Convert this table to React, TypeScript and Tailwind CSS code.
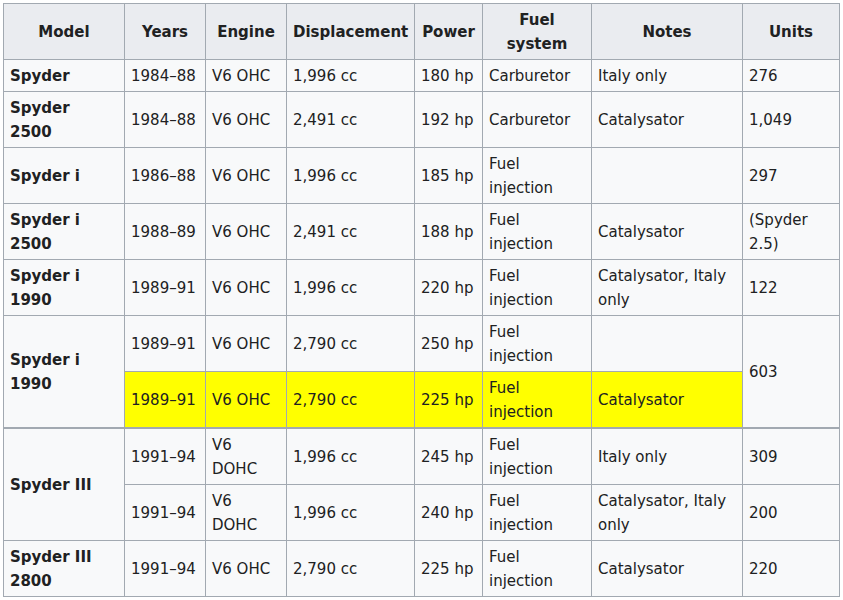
import { Fragment } from "react"

const rows: {
  model?: string
  modelSpan?: number
  years: string
  engine: string
  disp: string
  power: string
  fuel: string
  notes: string
  units?: string
  unitsSpan?: number
  highlight?: boolean
  thickTop?: boolean
}[] = [
  { model: "Spyder", years: "1984–88", engine: "V6 OHC", disp: "1,996 cc", power: "180 hp", fuel: "Carburetor", notes: "Italy only", units: "276" },
  { model: "Spyder|2500", years: "1984–88", engine: "V6 OHC", disp: "2,491 cc", power: "192 hp", fuel: "Carburetor", notes: "Catalysator", units: "1,049" },
  { model: "Spyder i", years: "1986–88", engine: "V6 OHC", disp: "1,996 cc", power: "185 hp", fuel: "Fuel injection", notes: "", units: "297" },
  { model: "Spyder i|2500", years: "1988–89", engine: "V6 OHC", disp: "2,491 cc", power: "188 hp", fuel: "Fuel injection", notes: "Catalysator", units: "(Spyder 2.5)" },
  { model: "Spyder i|1990", years: "1989–91", engine: "V6 OHC", disp: "1,996 cc", power: "220 hp", fuel: "Fuel injection", notes: "Catalysator, Italy only", units: "122" },
  { model: "Spyder i|1990", modelSpan: 2, years: "1989–91", engine: "V6 OHC", disp: "2,790 cc", power: "250 hp", fuel: "Fuel injection", notes: "", units: "603", unitsSpan: 2 },
  { years: "1989–91", engine: "V6 OHC", disp: "2,790 cc", power: "225 hp", fuel: "Fuel injection", notes: "Catalysator", highlight: true },
  { model: "Spyder III", modelSpan: 2, years: "1991–94", engine: "V6 DOHC", disp: "1,996 cc", power: "245 hp", fuel: "Fuel injection", notes: "Italy only", units: "309", thickTop: true },
  { years: "1991–94", engine: "V6 DOHC", disp: "1,996 cc", power: "240 hp", fuel: "Fuel injection", notes: "Catalysator, Italy only", units: "200" },
  { model: "Spyder III|2800", years: "1991–94", engine: "V6 OHC", disp: "2,790 cc", power: "225 hp", fuel: "Fuel injection", notes: "Catalysator", units: "220" },
]

const cell = "border border-[#a2a9b1] px-[6px] pt-[4px] pb-[3px] align-middle"

export default function App() {
  return (
    <div className="p-[3px] font-['DejaVu_Sans',sans-serif] text-[15px] leading-[24px] text-[#202122] bg-white min-h-[600px]">
      <table className="table-fixed border-collapse bg-[#f8f9fa] w-[836px]">
        <colgroup>
          <col className="w-[121px]" />
          <col className="w-[81px]" />
          <col className="w-[81px]" />
          <col className="w-[128px]" />
          <col className="w-[68px]" />
          <col className="w-[109px]" />
          <col className="w-[151px]" />
          <col className="w-[97px]" />
        </colgroup>
        <thead>
          <tr>
            {["Model", "Years", "Engine", "Displacement", "Power", "Fuel system", "Notes", "Units"].map((h) => (
              <th key={h} className={`${cell} bg-[#eaecf0] font-bold text-center`}>
                {h}
              </th>
            ))}
          </tr>
        </thead>
        <tbody>
          {rows.map((r, i) => {
            const top = r.thickTop ? "border-t-2 pt-[2px]" : ""
            const hl = r.highlight ? "bg-[#ffff00] pb-[2px]" : ""
            return (
              <tr key={i}>
                {r.model && (
                  <td rowSpan={r.modelSpan} className={`${cell} ${top} font-bold text-left`}>
                    {r.model.split("|").map((part, j) => (
                      <Fragment key={j}>
                        {j > 0 && <br />}
                        {part}
                      </Fragment>
                    ))}
                  </td>
                )}
                <td className={`${cell} ${top} ${hl}`}>{r.years}</td>
                <td className={`${cell} ${top} ${hl}`}>{r.engine}</td>
                <td className={`${cell} ${top} ${hl}`}>{r.disp}</td>
                <td className={`${cell} ${top} ${hl}`}>{r.power}</td>
                <td className={`${cell} ${top} ${hl}`}>{r.fuel}</td>
                <td className={`${cell} ${top} ${hl}`}>{r.notes}</td>
                {r.units && (
                  <td rowSpan={r.unitsSpan} className={`${cell} ${top}`}>
                    {r.units}
                  </td>
                )}
              </tr>
            )
          })}
        </tbody>
      </table>
    </div>
  )
}
